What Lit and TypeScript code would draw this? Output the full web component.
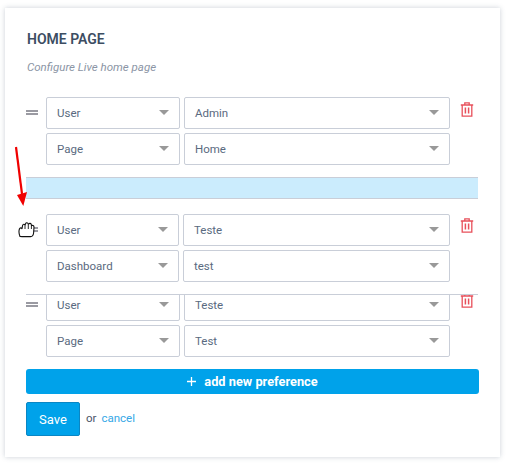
import { LitElement, html, css } from 'lit';
import { customElement } from 'lit/decorators.js';

const trash = html`<svg class="trash" width="14" height="15" viewBox="0 0 14 15" fill="none" stroke="#e8505b" stroke-width="1.3">
  <path d="M.8 3h12.4M4.8 3V.8h4.4V3M2.2 3v11.2h9.6V3"/>
  <path d="M5.4 5.6v6M8.6 5.6v6" stroke-width="1.5"/>
</svg>`;

const handle = html`<span class="handle"></span>`;

@customElement('app-root')
export class AppRoot extends LitElement {
  static styles = css`
    :host {
      display: block;
      width: 509px;
      height: 465px;
      background: #fff;
      font-family: Roboto, "Noto Sans", sans-serif;
      color: #5a6a80;
      overflow: hidden;
    }
    .page {
      position: relative;
      padding: 8px 9px 8px 5px;
      height: 449px;
    }
    .card {
      background: #fff;
      box-shadow: 0 0 5px rgba(70, 85, 110, 0.28);
      height: 449px;
      box-sizing: border-box;
      padding: 23px 21px 0;
    }
    h2 {
      margin: 0 0 0 1px;
      font-size: 14px;
      line-height: 16px;
      font-weight: 600;
      color: #3c4d62;
    }
    .sub {
      margin: 12px 0 0 1px;
      font-size: 11.5px;
      line-height: 16px;
      font-style: italic;
      color: #8b95a5;
    }
    .row {
      display: flex;
      width: 452px;
    }
    .row.first { margin-top: 22px; }
    .row.lifted { margin-top: 15px; }
    .row.cut {
      margin-top: 12px;
      height: 62px;
      border-top: 1px solid #c9ced8;
      overflow: hidden;
    }
    .row.cut .fields { margin-top: -6px; }
    .grip {
      width: 20px;
      flex: none;
      padding-top: 13px;
    }
    .row.cut .grip { padding-top: 7px; }
    .handle {
      display: block;
      width: 12px;
      height: 5px;
      border-top: 2px solid #9a9aa2;
      border-bottom: 2px solid #9a9aa2;
      box-sizing: border-box;
    }
    .fields {
      display: grid;
      grid-template-columns: 134px 266px;
      gap: 4px;
      align-content: start;
    }
    .lifted .fields { grid-template-columns: 133px 267px; }
    .select {
      height: 32px;
      box-sizing: border-box;
      border: 1px solid #c9ced8;
      border-radius: 2px;
      background: #fff;
      display: flex;
      align-items: center;
      justify-content: space-between;
      padding: 0 10px;
      font-size: 11.5px;
    }
    .caret {
      width: 0;
      height: 0;
      border-left: 5px solid transparent;
      border-right: 5px solid transparent;
      border-top: 5px solid #999;
      margin-bottom: 2px;
    }
    .trash { margin: 5px 0 0 10px; flex: none; }
    .lifted .trash { margin-top: 4px; }
    .row.cut .trash { margin-top: -2px; }
    .drop {
      margin-top: 12px;
      width: 452px;
      height: 22px;
      box-sizing: border-box;
      background: #cbecfd;
      border-top: 1px solid #c9ced8;
      border-bottom: 1px solid #c9ced8;
    }
    .add {
      margin-top: 12px;
      width: 453px;
      height: 25px;
      border-radius: 3px;
      background: #00a2ea;
      color: #fff;
      display: flex;
      align-items: center;
      justify-content: center;
      gap: 8px;
      font-size: 12.8px;
      font-weight: 700;
    }
    .add svg { flex: none; }
    .actions {
      margin-top: 8px;
      display: flex;
      align-items: center;
      gap: 6px;
      font-size: 11.5px;
      color: #4a5568;
    }
    .actions span { margin-bottom: 3px; }
    .save {
      width: 54px;
      height: 34px;
      box-sizing: border-box;
      background: #00a2ea;
      border: 1px solid #0a86c4;
      border-radius: 2px;
      color: #fff;
      font-size: 13px;
      display: flex;
      align-items: center;
      justify-content: center;
    }
    .actions a { color: #35a7e6; margin: 0 0 3px -1px; }
    .arrow {
      position: absolute;
      left: 12px;
      top: 144px;
    }
    .cursor {
      position: absolute;
      left: 18px;
      top: 221px;
    }
  `;

  field(label: string) {
    return html`<div class="select"><span>${label}</span><span class="caret"></span></div>`;
  }

  render() {
    return html`
      <div class="page">
        <div class="card">
          <h2>HOME PAGE</h2>
          <p class="sub">Configure Live home page</p>
          <div class="row first">
            <div class="grip">${handle}</div>
            <div class="fields">
              ${this.field('User')}${this.field('Admin')}
              ${this.field('Page')}${this.field('Home')}
            </div>
            ${trash}
          </div>
          <div class="drop"></div>
          <div class="row lifted">
            <div class="grip">${handle}</div>
            <div class="fields">
              ${this.field('User')}${this.field('Teste')}
              ${this.field('Dashboard')}${this.field('test')}
            </div>
            ${trash}
          </div>
          <div class="row cut">
            <div class="grip">${handle}</div>
            <div class="fields">
              ${this.field('User')}${this.field('Teste')}
              ${this.field('Page')}${this.field('Test')}
            </div>
            ${trash}
          </div>
          <div class="add">
            <svg width="9" height="9" viewBox="0 0 9 9"><path d="M4.5 0v9M0 4.5h9" stroke="#fff" stroke-width="1.3"/></svg>
            <span>add new preference</span>
          </div>
          <div class="actions">
            <div class="save">Save</div>
            <span>or</span>
            <a>cancel</a>
          </div>
        </div>
        <svg class="arrow" width="18" height="64" viewBox="0 0 18 64">
          <path d="M4 3 L10 50" stroke="#f00000" stroke-width="2.2" fill="none"/>
          <path d="M5 51 L15 48 L11.3 62 Z" fill="#f00000"/>
        </svg>
        <svg class="cursor" width="20" height="17" viewBox="0 0 20 17">
          <path d="M2 15.5 C1 13 .7 10 1.4 8 C2 6.6 3.4 6.6 4 7.6 L4.6 4.4 C5 3 6.6 3 7 4.2 L7.6 2.6 C8 1.4 9.8 1.4 10.2 2.8 L10.8 3 C11.4 2 13 2.2 13.3 3.6 L13.7 4.6 C14.4 4 16 4.6 16 6 L15.6 12 C15.4 14 14.4 15.6 12.6 15.6 L4 15.6 Z" fill="#fff" stroke="#111" stroke-width="1.1" stroke-linejoin="round"/>
          <path d="M7 4.5V8M10.3 3V8M13.4 4V8" stroke="#111" stroke-width=".9" fill="none"/>
        </svg>
      </div>
    `;
  }
}
